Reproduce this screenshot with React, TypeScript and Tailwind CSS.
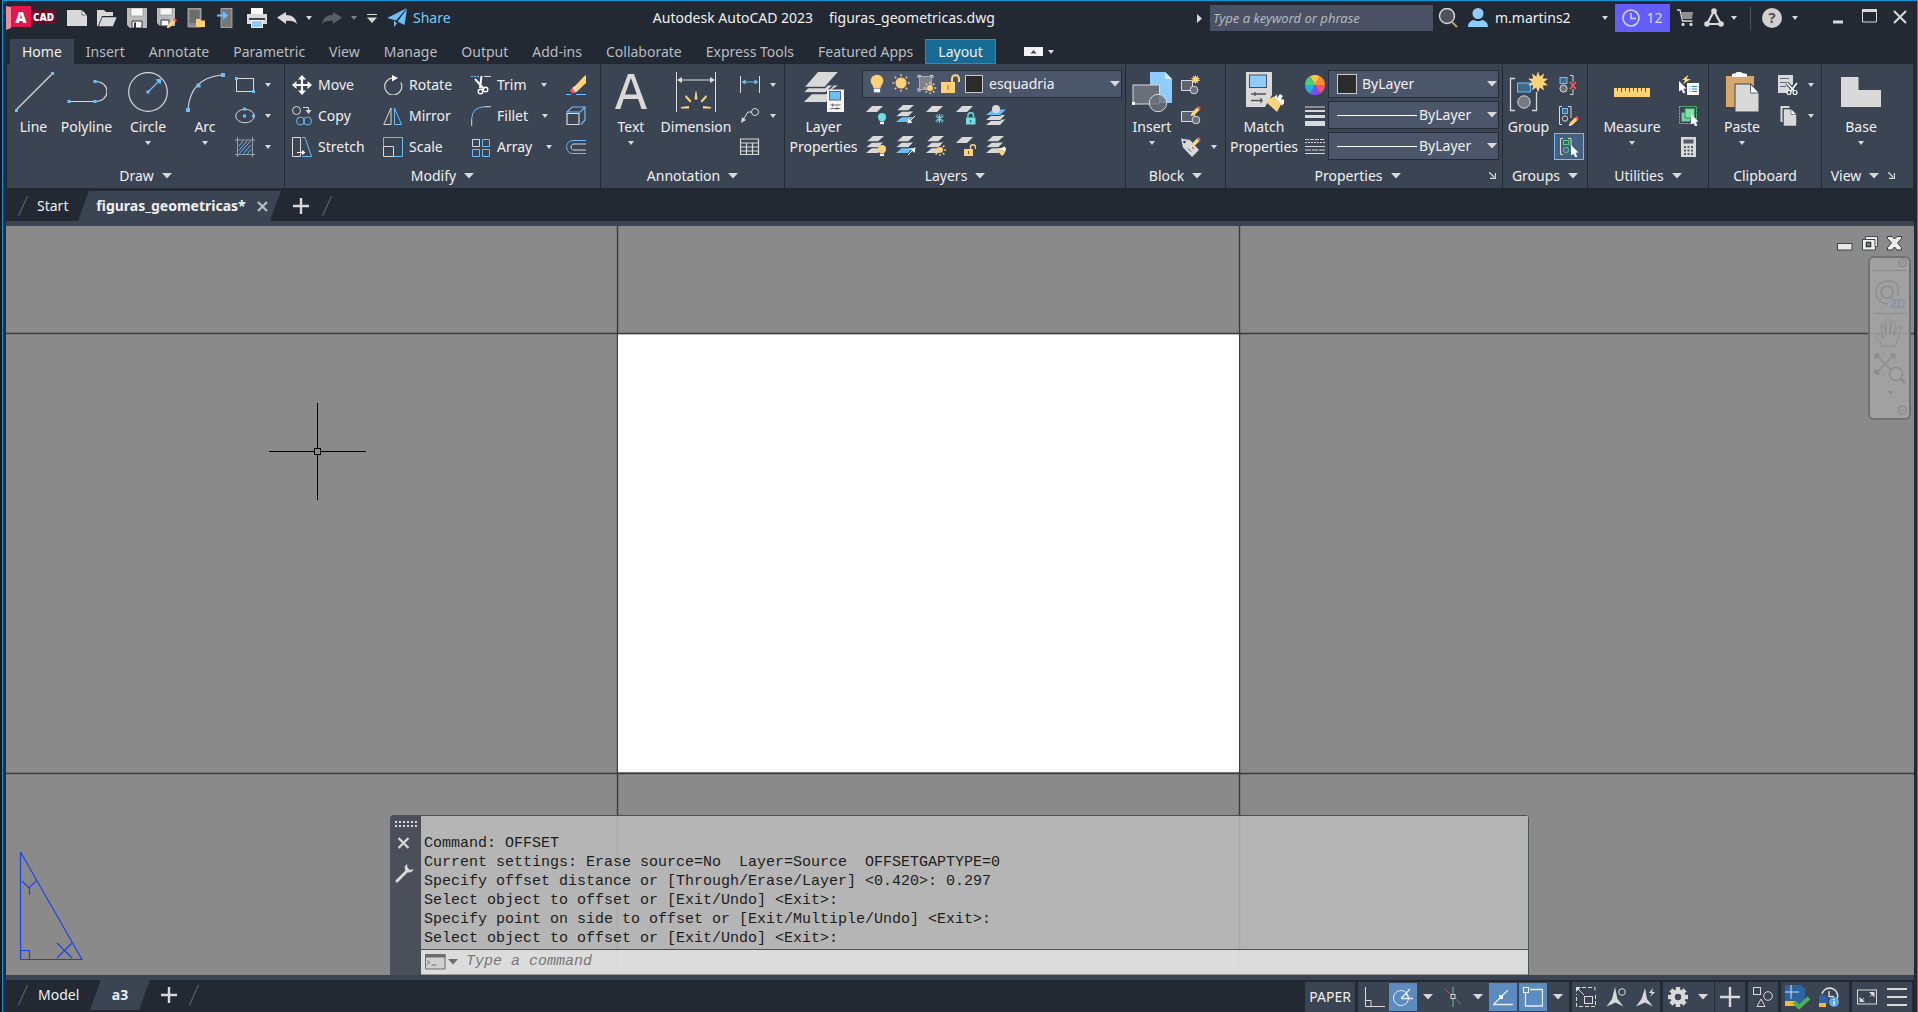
import { useState } from 'react'
import type { ReactNode } from 'react'

const L = '#d9d9d9'
const B = '#6dbdf8'
const Y = '#ffd27a'
const G = '#5bcb86'
const C = '#6fdde4'
const R = '#f25c5c'

type SvgProps = { children: ReactNode; w?: number; h?: number; vb?: string }

function Svg({ children, w = 20, h = 20, vb }: SvgProps) {
  return (
    <svg width={w} height={h} viewBox={vb ?? `0 0 ${w} ${h}`} fill="none" className="shrink-0" aria-hidden="true">
      {children}
    </svg>
  )
}

function Arrow({ big = false }: { big?: boolean }) {
  return big ? (
    <Svg w={10} h={6}>
      <path d="M0 0h10L5 5.500z" fill={L} />
    </Svg>
  ) : (
    <Svg w={6} h={4}>
      <path d="M0 0h6L3 4z" fill={L} />
    </Svg>
  )
}

/* ---------- shared pieces used by several icons ---------- */

const Dot = ({ x, y, s = 3 }: { x: number; y: number; s?: number }) => (
  <rect x={x - s / 2} y={y - s / 2} width={s} height={s} fill={B} />
)

const Pencil = ({ x, y }: { x: number; y: number }) => (
  <g transform={`translate(${x} ${y})`}>
    <path d="M0 9l1-3.500 5-5 2.500 2.500-5 5z" fill={Y} />
    <path d="M6 .5L7.500-1 10 1.500 8.500 3z" fill={R} />
    <path d="M0 9l.6-2 1.400 1.400z" fill="#fff" />
  </g>
)

const Sheets = ({ top = L, bottom = L }: { top?: string; bottom?: string }) => (
  <g>
    <path d="M6 12h11l-5 5H0z" fill={bottom} />
    <path d="M6 6.500h11l-5 5H0z" fill={L} />
    <path d="M7 0h11l-6 5.500H1z" fill={top} />
    <path d="M0 6h12.500l5-4.500M0 11.800h12.500l4-4" stroke="#3b4453" />
  </g>
)

const SunShape = ({ cx, cy, r }: { cx: number; cy: number; r: number }) => (
  <g stroke={Y} strokeWidth={1.4}>
    <circle cx={cx} cy={cy} r={r} fill={Y} stroke="none" />
    {[0, 45, 90, 135, 180, 225, 270, 315].map((a) => (
      <path key={a} d={`M${cx} ${cy - r - 1.2}v-2`} transform={`rotate(${a} ${cx} ${cy})`} />
    ))}
  </g>
)

const Star = ({ cx, cy, r }: { cx: number; cy: number; r: number }) => {
  const pts = Array.from({ length: 20 }, (_, i) => {
    const a = (Math.PI * i) / 10
    const d = i % 2 ? r * 0.55 : r
    return `${(cx + d * Math.sin(a)).toFixed(1)},${(cy - d * Math.cos(a)).toFixed(1)}`
  })
  return <polygon points={pts.join(' ')} fill={Y} />
}

const Bulb = ({ cx, cy, r, color = Y }: { cx: number; cy: number; r: number; color?: string }) => (
  <g>
    <circle cx={cx} cy={cy} r={r} fill={color} />
    <path d={`M${cx - r * 0.6} ${cy + r * 0.6}h${r * 1.2}v${r * 0.5}h-${r * 1.2}z`} fill={color} />
    <path d={`M${cx - r * 0.5} ${cy + r * 1.2}h${r}v${r * 0.6}h-${r}z`} fill="#fff" />
  </g>
)

const Cursor = ({ x, y }: { x: number; y: number }) => (
  <path d="M0 0l7.500 7.500-3 .3 1.800 3.700-2 1-1.800-3.800L0 10.500z" fill="#fff" transform={`translate(${x} ${y})`} />
)

/* ---------- 40px icons ---------- */

const big: Record<string, ReactNode> = {
  line: (
    <Svg w={40} h={40}>
      <path d="M2 38L38 2" stroke={L} strokeWidth={1.3} />
      <Dot x={2.5} y={38.5} />
      <Dot x={38.5} y={1.5} />
    </Svg>
  ),
  polyline: (
    <Svg w={40} h={40}>
      <path d="M2 29.500h26c16 0 16-20 0-20" stroke={L} strokeWidth={1.2} />
      <Dot x={2} y={29.5} />
      <Dot x={28} y={29.5} />
      <Dot x={28} y={9.5} />
    </Svg>
  ),
  circle: (
    <Svg w={40} h={40}>
      <circle cx={20} cy={20} r={19.3} stroke={L} strokeWidth={1.2} />
      <path d="M20 20L31 9" stroke={B} strokeWidth={1.3} />
      <path d="M33.500 6.500l-1 6-5-5z" fill={B} />
      <Dot x={20} y={20} />
    </Svg>
  ),
  arc: (
    <Svg w={40} h={40}>
      <path d="M3 38Q5 6 37 3" stroke={L} strokeWidth={1.2} />
      <Dot x={3} y={38} s={4} />
      <Dot x={13.500} y={13.500} s={4} />
      <Dot x={38} y={3} s={4} />
    </Svg>
  ),
  text: (
    <Svg w={40} h={40}>
      <path d="M4 37L17 2h6l13 35h-5.500l-3.300-10H12.600L9.300 37zM14 22.500h11.800L20 6z" fill={L} fillRule="evenodd" />
    </Svg>
  ),
  dimension: (
    <Svg w={40} h={40}>
      <path d="M.5 0v40M39.500 0v40M3 8h34" stroke={L} />
      <path d="M1 8l5-3v6zM39 8l-5-3v6z" fill={L} />
      <g fill={Y}>
        <path d="M18.500 27.500l1-8h1l1 8zM14 30.500l-5-5.500 1-2 5.500 6zM26 30.500l5-5.500-1-2-5.500 6zM13 34v2.500H5v-1.500zM27 34v2.500h8v-1.500z" />
      </g>
    </Svg>
  ),
  layers: (
    <Svg w={40} h={40}>
      <path d="M0 30l8-8h20l-6 8z" fill={L} />
      <path d="M0 20.500l7-7h27l-11 7z" fill={L} />
      <path d="M14 0h20L21 15H1z" fill={L} />
      <path d="M1 15.500h20L34 1M0 21h22M1 21.500h20l8-8" stroke="#3b4453" strokeWidth={1.500} />
      <rect x={23} y={17.500} width={17} height={22.500} fill="#f4f4f4" />
      <rect x={25.500} y={19.500} width={11} height={8.500} fill={B} stroke="#5b6270" />
      <path d="M26.500 33h10M26.500 36.500h10M28.500 31.500v3M33 35v3" stroke="#666" />
    </Svg>
  ),
  insert: (
    <Svg w={40} h={40}>
      <path d="M18 0h15l7 7v24H18z" fill="#8dccff" />
      <path d="M33 0v7h7z" fill="#d4ecff" />
      <rect x={1} y={13} width={26.500} height={19} fill="#6a707b" stroke={L} />
      <circle cx={26} cy={31} r={8.700} fill="#6a707b" fillOpacity={0.8} stroke={L} />
      <rect x={0} y={30} width={3} height={3} fill="#fff" />
    </Svg>
  ),
  match: (
    <Svg w={40} h={40} vb="-2 0 40 40">
      <path d="M0 0h26v23L19 35H0z" fill={L} />
      <rect x={3.500} y={3} width={17} height={12.500} fill="#8dccff" stroke="#4a505c" />
      <path d="M5 22h15M5 28.500h12M9 20v4M15 26v5" stroke="#555" strokeWidth={1.300} />
      <path d="M19 29l9-4.500 7 8L31 40z" fill={Y} />
      <path d="M28 25l3-2.500V26l3-4 3 2-2 3.500 4 0 .500 2.500-3.500 3.500z" fill="#f4f4f4" />
    </Svg>
  ),
  group: (
    <Svg w={40} h={40}>
      <path d="M6 6.500H1.500v32H6M23 38.500h4.500V20" stroke={L} strokeWidth={1.300} />
      <rect x={8.500} y={11} width={13} height={9} fill="#3e6a92" stroke={B} />
      <circle cx={15} cy={30} r={6.200} fill="#757b85" stroke={L} />
      <Star cx={29} cy={10} r={10.5} />
    </Svg>
  ),
  measure: (
    <Svg w={40} h={40}>
      <rect x={2} y={16} width={36} height={9} fill={Y} />
      <path d="M5.500 16v3M9.500 16v4M13.500 16v3M17.500 16v4M21.500 16v3M25.500 16v4M29.500 16v3M33.500 16v4" stroke="#6b5a3a" />
    </Svg>
  ),
  paste: (
    <Svg w={40} h={40}>
      <rect x={4} y={4} width={28} height={31} fill="#d6a86c" />
      <path d="M10 5V2l4-1c0-1.500 6-1.500 6 0l5 1v3z" fill="#fff" />
      <path d="M13 12h16l8 8v20H13z" fill={L} stroke="#3b4453" />
      <path d="M28.500 12v9H37z" fill="#fff" stroke="#3b4453" strokeWidth={0.800} />
    </Svg>
  ),
  base: (
    <Svg w={40} h={40}>
      <path d="M0 5h17.500v13H40v17H0z" fill={L} />
    </Svg>
  ),
}

/* ---------- 20px icons ---------- */

const small: Record<string, ReactNode> = {
  rect: (
    <Svg>
      <rect x={1.500} y={3.500} width={17} height={13} stroke={L} />
      <Dot x={1.5} y={3.5} />
      <Dot x={18.5} y={16.5} />
    </Svg>
  ),
  ellipse: (
    <Svg>
      <ellipse cx={10} cy={10} rx={9.300} ry={6.800} stroke={L} />
      <Dot x={9.5} y={10} />
      <Dot x={9.5} y={3} />
      <Dot x={18.5} y={10} />
    </Svg>
  ),
  hatch: (
    <Svg>
      <path d="M0 3h20M0 17.500h20M2.500 0v20M17.500 0v20" stroke="#9a9fa8" />
      <path d="M4 9l4-5M4 13.500L12 4M4.500 16.500L15.500 4M8.500 16.500l7.500-8.500M12.500 16.500l3.500-4" stroke={B} />
    </Svg>
  ),
  move: (
    <Svg>
      <path d="M10 1v18M1 10h18" stroke="#fff" strokeWidth={2.200} />
      <path d="M10 0l4 4.500H6zM10 20l4-4.500H6zM0 10l4.500-4v8zM20 10l-4.500-4v8z" fill="#fff" />
    </Svg>
  ),
  copy: (
    <Svg>
      <circle cx={4.500} cy={4.500} r={4} stroke={L} />
      <path d="M11 1.500h5.500V5" stroke={L} />
      <path d="M13.500 4h6l-3 4z" fill={L} />
      <circle cx={8.500} cy={15} r={4} stroke={B} />
      <circle cx={15.500} cy={15} r={4} stroke={B} />
    </Svg>
  ),
  stretch: (
    <Svg>
      <path d="M.5.500h8v19h-8z" stroke={L} />
      <path d="M10 .5h3l6.500 19H10" stroke={B} />
      <path d="M5 15.500h6" stroke="#fff" />
      <path d="M10 13l3.500 2.500L10 18z" fill="#fff" />
    </Svg>
  ),
  rotate: (
    <Svg>
      <path d="M17.800 7.500A8.500 8.500 0 1 1 9.500 3" stroke={L} strokeWidth={1.200} />
      <path d="M9 0l6 3-6 3.500z" fill="#fff" />
    </Svg>
  ),
  mirror: (
    <Svg>
      <path d="M8 2v16.500H.8z" stroke={L} />
      <path d="M11.500 2v16.500h7z" stroke={B} />
    </Svg>
  ),
  scale: (
    <Svg>
      <path d="M.5 9V.5h19v19H11" stroke={B} />
      <path d="M.5 9.500h10v10H.5z" stroke={L} />
    </Svg>
  ),
  trim: (
    <Svg>
      <path d="M0 1.500h9" stroke={B} strokeDasharray="2 1" />
      <path d="M13 1.500h7" stroke={L} />
      <path d="M4 4l9 10M10.500 1L9 13" stroke="#fff" strokeWidth={2} />
      <circle cx={9.500} cy={16.500} r={2.300} stroke="#fff" strokeWidth={1.400} />
      <circle cx={14.500} cy={14.500} r={2.300} stroke="#fff" strokeWidth={1.400} />
    </Svg>
  ),
  fillet: (
    <Svg>
      <path d="M.7 20v-7M14 .7h6" stroke={L} />
      <path d="M.7 13Q1 1 14 .7" stroke={B} />
    </Svg>
  ),
  array: (
    <Svg>
      <path d="M1.500 2.500h7v7h-7z" stroke={L} />
      <path d="M11.500 2.500h7v7h-7zM1.500 12.500h7v7h-7zM11.500 12.500h7v7h-7z" stroke={B} />
    </Svg>
  ),
  erase: (
    <Svg>
      <path d="M7 13L18 1.500 20 0v8L10.500 17z" fill={Y} />
      <path d="M4 15.500l3-3.500 3.500 5-4 1.500z" fill={R} />
      <path d="M6.500 13l2-2 3 4.500-2 2z" fill="#f3e6d0" />
      <path d="M0 19.500h5M10 19.500h10" stroke={B} />
    </Svg>
  ),
  explode: (
    <Svg>
      <path d="M1 7.500h12v11H1z" stroke={L} strokeWidth={1.200} />
      <path d="M1 6l5-5h13l-4.500 5zM15 18.500l4-4.500V2" stroke={B} strokeWidth={1.200} />
    </Svg>
  ),
  offset: (
    <Svg>
      <path d="M20 3.500H7c-8.500 0-8.500 13 0 13h13" stroke={B} />
      <path d="M20 7H8c-4 0-4 6 0 6h12" stroke={L} />
    </Svg>
  ),
  linear: (
    <Svg>
      <path d="M.5 1v17M19.500 1v17" stroke={L} />
      <path d="M3 7h14" stroke={B} />
      <path d="M1.500 7l4-2.500v5zM18.500 7l-4-2.500v5z" fill={B} />
    </Svg>
  ),
  leader: (
    <Svg>
      <circle cx={15} cy={6} r={3.500} stroke={L} />
      <path d="M11.500 6H8L3 14" stroke={L} />
      <path d="M1 17l1-6 4 3z" fill={L} />
    </Svg>
  ),
  table: (
    <Svg>
      <path d="M.5 2h18v15.500H.5zM.5 6h18M.5 10h18M.5 14h18M6.500 6v11.500M12.500 6v11.500" stroke={L} strokeWidth={1.200} />
    </Svg>
  ),
  layOff: (
    <Svg>
      <path d="M6 1h11l-6 6H0z" fill={L} />
      <Bulb cx={16} cy={12} r={4} color={C} />
    </Svg>
  ),
  layIso: (
    <Svg>
      <Sheets bottom={B} />
      <path d="M19 11l-5 5" stroke="#fff" />
      <path d="M11.500 18.500l1-5 4 4z" fill="#fff" />
    </Svg>
  ),
  layFreeze: (
    <Svg>
      <path d="M6 1h11l-6 6H0z" fill={L} />
      <path d="M13.500 9v9M9.500 11.200l8 4.600M17.500 11.200l-8 4.600M10.500 9.500l6 8M16.500 9.500l-6 8" stroke={C} />
    </Svg>
  ),
  layLock: (
    <Svg>
      <path d="M6 1h11l-6 6H0z" fill={L} />
      <rect x={10} y={12.500} width={9.500} height={7} fill={C} />
      <path d="M12 12.500v-2.500c0-3 5.500-3 5.500 0v2.500" stroke={C} strokeWidth={1.400} />
      <path d="M14.700 15v2.500" stroke="#2b5560" />
    </Svg>
  ),
  layCurrent: (
    <Svg>
      <path d="M7 14.500h12l-5 5.500H0z" fill={L} />
      <path d="M6 10h13l-5 5H0z" fill={L} />
      <path d="M7 4.500h13l-6 5.500H0z" fill={B} />
      <path d="M0 10.500h14.500l5-5M0 15.500h14.500l5-5" stroke="#3b4453" />
      <circle cx={10} cy={4} r={4} fill={L} />
    </Svg>
  ),
  layOn: (
    <Svg>
      <Sheets />
      <Bulb cx={16} cy={13} r={4} />
    </Svg>
  ),
  layUniso: (
    <Svg>
      <Sheets bottom={B} />
      <path d="M12 19l5-5" stroke="#fff" />
      <path d="M19.500 11.500l-1 5.500-4-4z" fill="#fff" />
    </Svg>
  ),
  layThaw: (
    <Svg>
      <Sheets />
      <SunShape cx={14} cy={14} r={3} />
    </Svg>
  ),
  layUnlock: (
    <Svg>
      <path d="M6 1h11l-6 6H0z" fill={L} />
      <rect x={8} y={13} width={9} height={7} fill={Y} />
      <path d="M14.500 13v-2c0-3 5-3 5 0v2" stroke={Y} strokeWidth={1.400} />
      <path d="M12.500 15v3" stroke="#6b5a3a" />
    </Svg>
  ),
  layMatch: (
    <Svg>
      <Sheets />
      <path d="M10.500 14l4-2 4.500 5-3 3z" fill={Y} />
      <path d="M14.500 12.500l4-2 1.500 2-1 4z" fill="#fff" />
    </Svg>
  ),
  blockNew: (
    <Svg>
      <path d="M.5 5.500h11v10H.5z" fill="#5c636f" stroke={L} />
      <circle cx={13} cy={15} r={3.800} fill="#6a707b" stroke={L} />
      <Star cx={14.500} cy={4.500} r={5} />
    </Svg>
  ),
  blockEdit: (
    <Svg>
      <path d="M.5 5.500h13v10H.5z" fill="#5c636f" stroke={L} />
      <circle cx={15} cy={14} r={3.800} fill="#6a707b" stroke={L} />
      <Pencil x={10} y={1} />
    </Svg>
  ),
  tag: (
    <Svg>
      <path d="M0 1.500L9 3l9 10-7 7L2 10.500z" fill={L} />
      <circle cx={3.500} cy={5} r={1.300} fill="#3b4453" />
      <path d="M7 11.500l3 3M10 9l3 3" stroke="#555" />
      <Pencil x={10} y={1} />
    </Svg>
  ),
  wheel: (
    <Svg>
      {['#ffc53d', '#ff8a3d', '#e9536b', '#7c4dff', '#19b5d8', '#4fcb7d'].map((c, i) => (
        <path key={c} d="M10 10L5 1.340A10 10 0 0 1 15 1.340z" fill={c} transform={`rotate(${i * 60} 10 10)`} />
      ))}
    </Svg>
  ),
  weights: (
    <Svg>
      <path d="M0 1h20" stroke={L} />
      <path d="M0 5h20" stroke={L} strokeWidth={2} />
      <path d="M0 10.500h20" stroke={L} strokeWidth={3} />
      <path d="M0 17.500h20" stroke={L} strokeWidth={5} />
    </Svg>
  ),
  types: (
    <Svg>
      <path d="M0 2.500h20" stroke={L} strokeDasharray="4 1" />
      <path d="M0 5.500h20" stroke={L} strokeDasharray="2 1" />
      <path d="M0 9.500h20M0 16.500h20" stroke={L} />
      <path d="M0 13h20" stroke={L} strokeDasharray="6 1" />
    </Svg>
  ),
  ungroup: (
    <Svg>
      <path d="M11 .5h3V7M11 19.500h3V14" stroke={L} />
      <rect x={1} y={2.500} width={7} height={6} fill="#3e6a92" stroke={B} />
      <circle cx={4.500} cy={13.500} r={3.600} fill="#6a707b" stroke={L} />
      <path d="M11 7l6 7M17 7l-6 7" stroke={R} strokeWidth={1.800} />
    </Svg>
  ),
  groupEdit: (
    <Svg>
      <path d="M3 .5H.5v18H3M9 .500h3V12" stroke={L} />
      <rect x={3.500} y={2.500} width={5} height={5} fill="#3e6a92" stroke={B} />
      <circle cx={6} cy={12.500} r={2.700} stroke={L} />
      <Pencil x={10} y={11} />
    </Svg>
  ),
  groupSelect: (
    <Svg>
      <path d="M4 1.500H1.500v16H4M9 1.500h3V9" stroke={L} />
      <rect x={4.500} y={3.500} width={5} height={4} fill="#2f6a5b" stroke={G} />
      <circle cx={7} cy={13} r={2.600} stroke={G} />
      <Cursor x={12} y={8} />
    </Svg>
  ),
  quick: (
    <Svg>
      <rect x={8} y={8} width={12} height={12} fill="#fff" />
      <path d="M10.500 11.500h1M13 11.500h5M10.500 14h1M13 14h5M10.500 16.500h1M13 16.500h5" stroke="#2f86c9" />
      <path d="M9 0L3 5h3L4 9l8-5H8z" fill={Y} />
      <Cursor x={0} y={6} />
    </Svg>
  ),
  selectAll: (
    <Svg>
      <path d="M.5.5h17v17H.5z" stroke={G} strokeDasharray="2 1" />
      <path d="M2.500 6.500h9v9h-9z" fill="#6fd69a" />
      <path d="M6 2.500h9.500V12H6z" fill="#7fe0a8" stroke="#3a8a5d" />
      <Cursor x={12} y={8} />
    </Svg>
  ),
  calc: (
    <Svg>
      <rect x={2} y={0} width={15} height={20} fill={L} />
      <rect x={4.500} y={2.500} width={10} height={4} fill="#555b66" />
      <path d="M5 10h2M8.500 10h2M12 10h2M5 13.500h2M8.500 13.500h2M12 13.500h2M5 17h2M8.500 17h2M12 17h2" stroke="#555b66" strokeWidth={2} />
    </Svg>
  ),
  cut: (
    <Svg>
      <path d="M0 0h15v9l-5 9H0z" fill={L} />
      <path d="M2 3.500h9M2 7.500h7M2 11.500h6" stroke="#666c77" />
      <path d="M9 8l8 9M19 8l-7 9" stroke="#3b4453" strokeWidth={3.600} />
      <path d="M9 8l8 9M19 8l-7 9" stroke="#fff" strokeWidth={1.600} />
      <circle cx={11} cy={17.500} r={2} fill="#3b4453" stroke="#fff" strokeWidth={1.200} />
      <circle cx={17} cy={17.500} r={2} fill="#3b4453" stroke="#fff" strokeWidth={1.200} />
    </Svg>
  ),
  copyClip: (
    <Svg>
      <path d="M3.500 16V1h8" stroke={L} strokeWidth={2} />
      <path d="M5.500 3h8l5 5v12h-13z" fill={L} stroke="#3b4453" strokeWidth={0.600} />
      <path d="M13 3v5.500h5.500z" fill="#fff" stroke="#3b4453" strokeWidth={0.600} />
    </Svg>
  ),
}

/* ---------- title bar ---------- */

const quickIcons: { name: string; icon: ReactNode }[] = [
  { name: 'New', icon: <Svg><path d="M0 2h15l5 5v11H0z" fill={L} /><path d="M15 2v5h5z" fill="#fff" stroke="#222933" strokeWidth={0.600} /></Svg> },
  { name: 'Open', icon: <Svg><path d="M0 2h7l2 2h7v4H5L1 18H0z" fill={L} /><path d="M5 9h15l-4 9.500H1.500z" fill={L} stroke="#222933" strokeWidth={0.500} /></Svg> },
  { name: 'Save', icon: <Svg><path d="M0 0h20v20H3l-3-3z" fill="#b9bbbe" /><path d="M4 0h12v8H4z" fill="#f7f7f7" stroke="#8a8a8a" strokeWidth={0.600} /><path d="M5 13h10v7H5z" fill="#f7f7f7" stroke="#333" /><path d="M7 14.500h2V20H7z" fill="#333" /></Svg> },
  { name: 'Save As', icon: <Svg><path d="M0 0h18v18H3l-3-3z" fill="#b9bbbe" /><path d="M3 0h12v7H3z" fill="#f7f7f7" stroke="#8a8a8a" strokeWidth={0.600} /><path d="M4 12h8v6H4z" fill="#f7f7f7" stroke="#333" /><Pencil x={10} y={11} /></Svg> },
  { name: 'Open from mobile', icon: <Svg><path d="M1 0h13v19H1z" fill="#8a8a8a" stroke="#b9b9b9" strokeWidth={0.800} /><path d="M2.500 2h10v13h-10z" fill="#6d6d6d" /><path d="M9 11h4l1 1.500h4V19H9z" fill={Y} /></Svg> },
  { name: 'Save to mobile', icon: <Svg><path d="M4 .5h11v19H4z" fill="#777" stroke="#b9b9b9" strokeWidth={0.800} /><path d="M0 7.500h7" stroke={B} strokeWidth={2} /><path d="M6 3l5 4.500L6 12z" fill={B} /></Svg> },
  { name: 'Plot', icon: <Svg><path d="M4 0h12v6H4z" fill="#fff" /><path d="M0 6h20v10H0z" fill={L} /><path d="M2 11h16" stroke="#444" strokeWidth={2} /><path d="M4.500 12.500h11v7h-11z" fill="#8dccff" stroke="#fff" /></Svg> },
  { name: 'Undo', icon: <Svg><path d="M0 9.500L9 4v3c6 0 10 3 11 9-3-3-6-3.500-11-3v3z" fill={L} /></Svg> },
]

function TitleBar() {
  return (
    <header className="mb-1 flex h-[34px] items-center text-sm text-[#f0f0f0]">
      <button aria-label="AutoCAD menu" className="ml-[3px] shrink-0">
        <Svg w={50} h={24}>
          <path d="M0 0l5 1v21l-5 2z" fill="#f08aa0" />
          <rect x={25} y={3} width={25} height={15} fill="#6e0a29" />
          <path d="M5 0h20v21H5z" fill="#e4164c" />
          <text x={15} y={17} textAnchor="middle" fontSize={15} fontWeight={800} fill="#fff" fontFamily="Open Sans, sans-serif">A</text>
          <text x={37.500} y={14.500} textAnchor="middle" fontSize={10} fontWeight={800} fill="#fff" fontFamily="Open Sans, sans-serif">CAD</text>
        </Svg>
      </button>
      <div className="ml-[11px] flex items-center gap-[10px]">
        {quickIcons.map((q) => (
          <button key={q.name} aria-label={q.name} title={q.name}>
            {q.icon}
          </button>
        ))}
      </div>
      <button aria-label="Undo list" className="ml-[9px]">
        <Arrow />
      </button>
      <button aria-label="Redo" className="ml-[10px] opacity-30">
        <Svg>
          <path d="M20 9.500L11 4v3C5 7 1 10 0 16c3-3 6-3.500 11-3v3z" fill={L} />
        </Svg>
      </button>
      <button aria-label="Redo list" className="ml-[9px] opacity-50">
        <Arrow />
      </button>
      <button aria-label="Customize toolbar" className="ml-[10px]">
        <Svg w={10} h={9}>
          <path d="M0 .5h10" stroke={L} />
          <path d="M0 3.500h10L5 9z" fill={L} />
        </Svg>
      </button>
      <button className="ml-[10px] flex items-center gap-[6px] text-[#7cc8f8]">
        <Svg>
          <path d="M0 10L20 0 9 12.500zM7 12.500V19l3-3.500zM10.500 13.500L20 1l-2.500 16z" fill={B} />
        </Svg>
        Share
      </button>

      <div className="flex min-w-0 flex-1 justify-center gap-4 whitespace-nowrap">
        <span>Autodesk AutoCAD 2023</span>
        <span>figuras_geometricas.dwg</span>
      </div>

      <button aria-label="Collapse search">
        <Svg w={5} h={9}>
          <path d="M0 0l5 4.500L0 9z" fill={L} />
        </Svg>
      </button>
      <input
        aria-label="Search help"
        placeholder="Type a keyword or phrase"
        className="ml-2 h-[26px] w-[223px] bg-[#4a5164] px-[3px] text-[13px] italic outline-none placeholder:text-[#b4b8c0]"
      />
      <button aria-label="Search" className="ml-[5px]">
        <Svg>
          <circle cx={9} cy={8} r={7.500} fill="#4c525c" stroke={L} strokeWidth={1.400} />
          <path d="M14 14l5 5" stroke="#c89a62" strokeWidth={2} />
        </Svg>
      </button>
      <button className="ml-[10px] flex w-[140px] items-center gap-[7px]">
        <Svg>
          <circle cx={10} cy={5.500} r={5.500} fill="#8dccff" />
          <path d="M0 19c0-5 4-7 6-7 2 1.500 6 1.500 8 0 2 0 6 2 6 7z" fill="#8dccff" />
        </Svg>
        <span className="flex-1 text-left">m.martins2</span>
        <Arrow />
      </button>
      <button className="ml-[7px] flex h-7 w-[55px] items-center justify-center gap-[6px] bg-[#625dfb] text-[#dcdcff]">
        <Svg w={18} h={18}>
          <circle cx={9} cy={9} r={8} stroke="#d5d4ff" strokeWidth={1.600} />
          <path d="M9 4v5.500h5" stroke="#d5d4ff" strokeWidth={1.600} />
        </Svg>
        12
      </button>
      <button aria-label="App store" className="ml-[7px]">
        <Svg w={17} h={18}>
          <path d="M0 1h3l2.500 11h10" stroke={L} strokeWidth={1.300} />
          <path d="M4 3h12l-1 7H5.500z" fill="#8f8f8f" />
          <path d="M5 14.500h2v2H5zM13 14.500h2v2h-2z" fill={L} stroke={L} />
        </Svg>
      </button>
      <button aria-label="Autodesk app menu" className="ml-[10px] flex items-center gap-[7px]">
        <Svg>
          <path d="M10 3L3 16h14z" stroke={L} strokeWidth={2.200} />
          <circle cx={10} cy={3} r={2.800} fill={L} />
          <circle cx={3} cy={16} r={2.800} fill={L} />
          <circle cx={17} cy={16} r={2.800} fill={L} />
        </Svg>
        <Arrow />
      </button>
      <div className="ml-[13px] h-6 w-px bg-[#4a5164]" />
      <button aria-label="Help" className="ml-[11px] flex items-center gap-[10px]">
        <span className="flex size-5 items-center justify-center rounded-full bg-[#d0d0d0] text-[15px] font-bold text-[#555]">?</span>
        <Arrow />
      </button>
      <button aria-label="Minimize" className="ml-[35px]">
        <Svg w={10} h={12}>
          <path d="M0 10h10" stroke={L} strokeWidth={3} />
        </Svg>
      </button>
      <button aria-label="Maximize" className="ml-[19px]">
        <Svg w={15} h={18}>
          <path d="M.5 1v12h14V1" stroke={L} />
          <path d="M0 1.500h15" stroke={L} strokeWidth={3} />
        </Svg>
      </button>
      <button aria-label="Close" className="mr-2.5 ml-4">
        <Svg w={14} h={18}>
          <path d="M1 2l12 12M13 2L1 14" stroke={L} strokeWidth={2} />
        </Svg>
      </button>
    </header>
  )
}

/* ---------- ribbon tabs ---------- */

const ribbonTabs = ['Home', 'Insert', 'Annotate', 'Parametric', 'View', 'Manage', 'Output', 'Add-ins', 'Collaborate', 'Express Tools', 'Featured Apps', 'Layout']

function RibbonTabs() {
  const [tab, setTab] = useState('Home')
  return (
    <nav className="flex h-[25px] items-center pl-[7px] text-sm whitespace-nowrap">
      {ribbonTabs.map((t) => (
        <button
          key={t}
          onClick={() => setTab(t)}
          className={`h-full px-3 ${t === tab ? 'bg-[#3b4453] text-[#f0f0f0]' : t === 'Layout' ? 'border border-[#0a96d9] bg-[#176a93] text-[#f0f0f0]' : 'text-[#b9bcc1]'}`}
        >
          {t}
        </button>
      ))}
      <button aria-label="Minimize ribbon" className="ml-[28px] flex items-center gap-[5px]">
        <Svg w={19} h={9}>
          <rect width={19} height={9} fill="#f2f2f2" />
          <path d="M6.500 6.500L9.500 3l3 3.500z" fill="#444" />
        </Svg>
        <Arrow />
      </button>
    </nav>
  )
}

/* ---------- ribbon ---------- */

function BigButton({ icon, label, label2, arrow, className }: { icon: string; label: string; label2?: string; arrow?: boolean; className: string }) {
  return (
    <button className={`flex shrink-0 flex-col items-center pt-[3px] leading-5 ${className}`}>
      {big[icon]}
      <span className="mt-[5px] whitespace-nowrap">{label}</span>
      {label2 && <span className="whitespace-nowrap">{label2}</span>}
      {arrow && <span className="mt-1"><Arrow /></span>}
    </button>
  )
}

function Tool({ icon, label, arrow, active }: { icon: string; label?: string; arrow?: boolean; active?: boolean }) {
  return (
    <button
      aria-label={label ?? icon}
      className={`flex h-[27px] shrink-0 items-center ${active ? '-mx-[5px] border border-[#6dbdf8] bg-[#46617f] px-1' : ''}`}
    >
      {small[icon]}
      {label && <span className="mr-1 ml-[6px]">{label}</span>}
      {arrow && <span className="ml-[10px]"><Arrow /></span>}
    </button>
  )
}

// three rows of small tools, stacked
function Stack({ children, className = '' }: { children: ReactNode; className?: string }) {
  return <div className={`flex shrink-0 flex-col items-start gap-1 pt-[2px] ${className}`}>{children}</div>
}

function Panel({ title, arrow = true, launcher, className, children }: { title: string; arrow?: boolean; launcher?: boolean; className: string; children: ReactNode }) {
  return (
    <section className={`flex flex-col border-r border-[#222933] ${className}`}>
      <div className="flex h-[99px] pt-[5px]">{children}</div>
      <div className="flex h-[25px] items-center">
        <button className="flex flex-1 items-center justify-center gap-2">
          {title}
          {arrow && <Arrow big />}
        </button>
        {launcher && (
          <button aria-label={`${title} settings`} className="mr-[6px]">
            <Svg w={7} h={7}>
              <path d="M0 0l5 5M6.500 1v5.500H1" stroke={L} strokeWidth={1.300} />
            </Svg>
          </button>
        )}
      </div>
    </section>
  )
}

const comboClass = 'flex h-7 items-center border border-[#262c37] bg-[#4c566a]'

function Ribbon() {
  return (
    <div className="mr-[4px] ml-[4px] flex h-[124px] bg-[#3b4453] text-sm text-[#f0f0f0]">
      <Panel title="Draw" className="w-[278px]">
        <BigButton icon="line" label="Line" className="w-[53px]" />
        <BigButton icon="polyline" label="Polyline" className="w-[53px]" />
        <BigButton icon="circle" label="Circle" arrow className="w-[70px]" />
        <BigButton icon="arc" label="Arc" arrow className="w-11" />
        <Stack className="pl-2">
          <Tool icon="rect" arrow />
          <Tool icon="ellipse" arrow />
          <Tool icon="hatch" arrow />
        </Stack>
      </Panel>

      <Panel title="Modify" className="w-[316px]">
        <Stack className="w-[98px] pl-[7px]">
          <Tool icon="move" label="Move" />
          <Tool icon="copy" label="Copy" />
          <Tool icon="stretch" label="Stretch" />
        </Stack>
        <Stack className="w-[88px]">
          <Tool icon="rotate" label="Rotate" />
          <Tool icon="mirror" label="Mirror" />
          <Tool icon="scale" label="Scale" />
        </Stack>
        <Stack className="w-[95px]">
          <Tool icon="trim" label="Trim" arrow />
          <Tool icon="fillet" label="Fillet" arrow />
          <Tool icon="array" label="Array" arrow />
        </Stack>
        <Stack>
          <Tool icon="erase" />
          <Tool icon="explode" />
          <Tool icon="offset" />
        </Stack>
      </Panel>

      <Panel title="Annotation" className="w-[184px]">
        <BigButton icon="text" label="Text" arrow className="w-[60px]" />
        <BigButton icon="dimension" label="Dimension" className="w-[70px]" />
        <Stack className="pl-[9px]">
          <Tool icon="linear" arrow />
          <Tool icon="leader" arrow />
          <Tool icon="table" />
        </Stack>
      </Panel>

      <Panel title="Layers" className="w-[341px]">
        <BigButton icon="layers" label="Layer" label2="Properties" className="w-[77px]" />
        <div className="flex flex-col gap-[3px] pt-px">
          <div className={`${comboClass} w-[260px] pl-[7px]`}>
            <Svg w={94} h={20}>
              <Bulb cx={7} cy={7} r={6.300} />
              <SunShape cx={31} cy={9} r={5.500} />
              <path d="M48 4V1.500h3M60 1.500h3V4M48 14v3h3" stroke={L} />
              <rect x={49.500} y={2.500} width={12} height={13} fill="#7d828d" stroke="#a5a9b2" />
              <SunShape cx={60} cy={14} r={3} />
              <rect x={71} y={8} width={14} height={11} fill={Y} />
              <path d="M82 8V5c0-5 7-5 7 0v3" stroke={Y} strokeWidth={2} />
              <path d="M78 11v5" stroke="#8a6d33" />
            </Svg>
            <span className="ml-px size-[18px] shrink-0 border border-[#c9c9c9] bg-[#2b2b2b]" />
            <select aria-label="Layer" className="ml-[6px] min-w-0 flex-1 appearance-none bg-transparent outline-none">
              <option>esquadria</option>
            </select>
            <span className="pointer-events-none mr-px"><Arrow big /></span>
          </div>
          <div className="flex gap-[10px] pl-1">
            {['layOff', 'layIso', 'layFreeze', 'layLock', 'layCurrent'].map((i) => <Tool key={i} icon={i} />)}
          </div>
          <div className="mt-px flex gap-[10px] pl-1">
            {['layOn', 'layUniso', 'layThaw', 'layUnlock', 'layMatch'].map((i) => <Tool key={i} icon={i} />)}
          </div>
        </div>
      </Panel>

      <Panel title="Block" className="w-[100px]">
        <BigButton icon="insert" label="Insert" arrow className="w-[52px]" />
        <Stack className="pl-[3px]">
          <Tool icon="blockNew" />
          <Tool icon="blockEdit" />
          <Tool icon="tag" arrow />
        </Stack>
      </Panel>

      <Panel title="Properties" launcher className="w-[277px]">
        <BigButton icon="match" label="Match" label2="Properties" className="w-[76px]" />
        <Stack className="pl-[3px]">
          <Tool icon="wheel" />
          <Tool icon="weights" />
          <Tool icon="types" />
        </Stack>
        <div className="ml-[3px] flex w-[171px] flex-col gap-[3px] pt-px">
          <div className={`${comboClass} pl-2`}>
            <span className="size-5 shrink-0 border border-[#c9c9c9] bg-[#2b2b2b]" />
            <select aria-label="Object color" className="ml-[5px] min-w-0 flex-1 appearance-none bg-transparent outline-none">
              <option>ByLayer</option>
            </select>
            <span className="pointer-events-none mr-px"><Arrow big /></span>
          </div>
          {['Lineweight', 'Linetype'].map((n) => (
            <div key={n} className={`${comboClass} pl-2`}>
              <span className="h-px w-20 shrink-0 bg-white" />
              <select aria-label={n} className="ml-[2px] min-w-0 flex-1 appearance-none bg-transparent outline-none">
                <option>ByLayer</option>
              </select>
              <span className="pointer-events-none mr-px"><Arrow big /></span>
            </div>
          ))}
        </div>
      </Panel>

      <Panel title="Groups" className="w-[85px]">
        <BigButton icon="group" label="Group" className="w-[51px]" />
        <Stack className="pl-[5px]">
          <Tool icon="ungroup" />
          <Tool icon="groupEdit" />
          <Tool icon="groupSelect" active />
        </Stack>
      </Panel>

      <Panel title="Utilities" className="w-[121px]">
        <BigButton icon="measure" label="Measure" arrow className="w-[88px]" />
        <Stack className="pl-[3px]">
          <Tool icon="quick" />
          <Tool icon="selectAll" />
          <Tool icon="calc" />
        </Stack>
      </Panel>

      <Panel title="Clipboard" arrow={false} className="w-[113px]">
        <BigButton icon="paste" label="Paste" arrow className="w-[66px]" />
        <Stack className="pl-[3px]">
          <Tool icon="cut" arrow />
          <Tool icon="copyClip" arrow />
        </Stack>
      </Panel>

      <Panel title="View" launcher className="flex-1 border-r-0 pr-3">
        <BigButton icon="base" label="Base" arrow className="w-[78px]" />
      </Panel>
    </div>
  )
}

/* ---------- file and layout tabs ---------- */

const Slash = ({ h }: { h: number }) => (
  <Svg w={10} h={h}>
    <path d={`M9.500 0L.5 ${h}`} stroke="#5a6270" strokeWidth={1.200} />
  </Svg>
)

const Plus = () => (
  <Svg w={16} h={16}>
    <path d="M8 0v16M0 8h16" stroke={L} strokeWidth={2.400} />
  </Svg>
)

function FileTabs() {
  return (
    <div className="mt-[3px] flex h-[30px] items-center pl-[15px] text-sm text-[#f0f0f0]">
      <Slash h={20} />
      <button className="ml-[9px] w-[41px] text-left">Start</button>
      <div className="flex h-full w-[203px] items-center justify-center gap-[11px] bg-[#3b4453] pl-[5px] font-bold [clip-path:polygon(11px_0,100%_0,calc(100%-11px)_100%,0_100%)]">
        <button>figuras_geometricas*</button>
        <button aria-label="Close drawing">
          <Svg w={11} h={11}>
            <path d="M1 1l9 9M10 1l-9 9" stroke="#b9bcc1" strokeWidth={2.200} />
          </Svg>
        </button>
      </div>
      <button aria-label="New drawing" className="ml-3">
        <Plus />
      </button>
      <span className="ml-[13px]"><Slash h={20} /></span>
    </div>
  )
}

/* ---------- drawing area ---------- */

const logLines = [
  'Command: OFFSET',
  'Current settings: Erase source=No  Layer=Source  OFFSETGAPTYPE=0',
  'Specify offset distance or [Through/Erase/Layer] <0.420>: 0.297',
  'Select object to offset or [Exit/Undo] <Exit>:',
  'Specify point on side to offset or [Exit/Multiple/Undo] <Exit>:',
  'Select object to offset or [Exit/Undo] <Exit>:',
]

function CommandWindow() {
  return (
    <div className="absolute right-[385px] bottom-0 left-[384px] flex overflow-hidden rounded-t-sm font-['Liberation_Mono',monospace] text-[15px] text-[#1c1c1c]">
      <div className="flex w-[31px] shrink-0 flex-col items-center bg-[#4a4f5a] pt-[6px]">
        <Svg w={22} h={7}>
          <path d="M0 1h22M0 5h22" stroke={L} strokeWidth={2} strokeDasharray="2 2" />
        </Svg>
        <button aria-label="Close command line" className="mt-[9px] mr-1">
          <Svg w={13} h={12}>
            <path d="M1.500 1l10 10M11.500 1L1.500 11" stroke={L} strokeWidth={2.200} />
          </Svg>
        </button>
        <button aria-label="Customize" className="mt-[14px] mr-[2px]">
          <Svg w={19} h={20}>
            <path d="M2 18L12 8" stroke={L} strokeWidth={3} strokeLinecap="round" />
            <path d="M12 1a4.500 4.500 0 1 0 6.500 5L15 7l-2.500-2.500z" fill={L} />
          </Svg>
        </button>
      </div>
      <div className="min-w-0 flex-1 border-t border-r border-[#4a4f5a]">
        <div className="bg-[#bcbcbc]/85 pt-[18px] pb-px pl-[3px] leading-[19px] whitespace-pre">
          {logLines.map((l, i) => (
            <div key={i}>{l}</div>
          ))}
        </div>
        <label className="flex h-[26px] items-center border-t border-b border-t-[#4a4f5a] border-b-[#9a9a9a] bg-[#e0e0e0]/95 pl-1">
          <Svg w={21} h={16}>
            <path d="M.5.500h19.500v14.500H.5z" stroke="#6d6d6d" fill="#d0d0d0" />
            <path d="M0 0h20.500v3.500H0z" fill="#6d6d6d" />
            <path d="M2 6.500l3 2-3 2M6.500 11h5" stroke="#6d6d6d" />
          </Svg>
          <span className="mx-[2px]">
            <Svg w={10} h={6}>
              <path d="M0 0h10L5 5.500z" fill="#6d6d6d" />
            </Svg>
          </span>
          <input aria-label="Command" placeholder="Type a command" className="ml-[6px] min-w-0 flex-1 bg-transparent italic outline-none placeholder:text-[#777]" />
        </label>
      </div>
    </div>
  )
}

function NavBar() {
  return (
    <div className="absolute top-[30px] right-[3px] h-[164px] w-[43px] rounded-md border-2 border-[#727272] bg-[#a3a3a3]/90">
      <svg width={38} height={159} viewBox="0 0 38 159" fill="none" stroke="#8c8c8c" aria-hidden="true">
        <circle cx={32.500} cy={5} r={3.800} strokeWidth={1.500} />
        <path d="M31 3.500l3 3M34 3.500l-3 3M2 12.500h35M4 55.500h33" />
        <path d="M28 38V29c0-4-4-6-10-6-7 0-12 5-12 11s5 12 12 12" strokeWidth={1.300} />
        <circle cx={17} cy={34} r={6} strokeWidth={1.500} />
        <path d="M9 43l4-4M21 39l3 3" />
        <text x={20} y={50} fontSize={12} fontWeight={700} fill="#8795a5" stroke="none" fontFamily="Open Sans, sans-serif">2D</text>
        <path d="M12 88C10 83 5 79 6 77c1-2 5 0 7 4l-2-13c0-3 3-3 3 0l2 9V63c0-3 4-3 4 0v13l2-11c1-3 4-2 3 1l-1 12 4-9c2-2 4-1 3 1-2 7-3 12-6 18z" />
        <path d="M6 97l18 18M24 97L6 115" strokeWidth={1.300} />
        <path d="M5 96h5l-5 5zM25 96h-5l5 5zM5 116h5l-5-5z" fill="#8c8c8c" />
        <circle cx={26} cy={116} r={6.500} fill="#a3a3a3" strokeWidth={1.500} />
        <path d="M31 121l4 4" strokeWidth={3} />
        <path d="M17 133h7l-3.500 3.500z" fill="#8c8c8c" stroke="none" />
        <circle cx={32.500} cy={152} r={4} strokeWidth={1.500} />
        <path d="M30.500 152h4" />
      </svg>
    </div>
  )
}

function Canvas() {
  return (
    <main className="relative mr-[3px] ml-[3px] min-h-0 flex-1 overflow-hidden bg-[#8a8a8a]">
      <svg className="absolute inset-0 size-full" fill="none" aria-label="Layout a3">
        <g stroke="#3c3c3c" strokeWidth={1.400}>
          <path d="M611.500 0V1000M1233.500 0V1000" />
          <path d="M0 107.500H4000M0 547.500H4000" />
        </g>
        <rect x={612} y={108.500} width={621} height={437.500} fill="#fff" />
        {/* crosshair */}
        <path d="M263 225.500h45M315 225.500h45M311.500 177v45M311.500 229v45" stroke="#000" />
        <rect x={308.500} y={222.500} width={6} height={6} stroke="#000" />
      </svg>
      {/* UCS icon */}
      <svg className="absolute bottom-[13px] left-[13px]" width={64} height={112} viewBox="0 0 64 112" fill="none" stroke="#1a45e6" aria-hidden="true">
        <path d="M1.500 2v107.500H63L1.500 2M1.500 100.500h9v9M3 31l7 7 7-7M10.500 38v7M38 93l15 15M53 93l-15 15" strokeWidth={1.200} />
      </svg>
      <div className="absolute top-[10px] right-3 flex items-start gap-[9px]">
        <button aria-label="Minimize viewport">
          <Svg w={16} h={15}>
            <rect x={0.500} y={7.500} width={14.500} height={6.500} fill="#e8e8e8" stroke="#444" />
          </Svg>
        </button>
        <button aria-label="Restore viewport">
          <Svg w={16} h={15}>
            <path d="M3.500.500h12v10h-2V14H.5V3.500h3z" fill="#f0f0f0" stroke="#3f4452" />
            <path d="M3.500 3.500h9.500V11" stroke="#3f4452" />
            <rect x={4.500} y={6.500} width={4} height={4} fill="#999" stroke="#333" strokeWidth={1.500} />
          </Svg>
        </button>
        <button aria-label="Close viewport">
          <Svg w={15} h={15}>
            <path d="M.5.500h4.500l2.500 2.500L10 .500h4.500v2L10.500 7l4 4.500V14H10L7.500 11 5 14H.5v-2.500L4.500 7 .5 2.500z" fill="#eee" stroke="#333" />
          </Svg>
        </button>
      </div>
      <NavBar />
      <CommandWindow />
    </main>
  )
}

/* ---------- status bar ---------- */

function Toggle({ label, on, children }: { label: string; on?: boolean; children: ReactNode }) {
  const [active, setActive] = useState(!!on)
  return (
    <button
      aria-label={label}
      aria-pressed={active}
      onClick={() => setActive(!active)}
      className={`flex h-7 w-7 items-center justify-center ${active ? 'bg-[#5b8bbf]' : ''}`}
    >
      {children}
    </button>
  )
}

const groupClass = 'flex h-full items-center bg-[#3b4453]'

function Drop({ label }: { label: string }) {
  return (
    <button aria-label={label} className="flex w-[22px] justify-center">
      <Arrow big />
    </button>
  )
}

function StatusBar() {
  return (
    <footer className="flex h-8 items-stretch text-sm text-[#f0f0f0]">
      <div className="flex items-start">
        <div className="flex h-[30px] items-center pl-[15px]">
          <Slash h={20} />
          <button className="ml-[10px] w-[52px] text-left">Model</button>
          <button className="h-full w-[60px] bg-[#3b4453] font-bold [clip-path:polygon(11px_0,100%_0,calc(100%-11px)_100%,0_100%)]">a3</button>
          <button aria-label="New layout" className="ml-[11px]">
            <Plus />
          </button>
          <span className="ml-3"><Slash h={20} /></span>
        </div>
      </div>
      <div className="mr-[5px] ml-auto flex items-center gap-[3px] pt-[2px]">
        <button className={`${groupClass} px-1`}>PAPER</button>
        <div className={`${groupClass} pl-[3px]`}>
          <Toggle label="Grid">
            <Svg><path d="M.5 0v19.500H20M.5 13.500H6v6" stroke={L} /></Svg>
          </Toggle>
          <Toggle label="Polar tracking" on>
            <Svg>
              <circle cx={8} cy={11} r={7.500} stroke="#e8eef5" />
              <path d="M8 11.500h12M8 11.500L17 2M13 6.500l3 5" stroke="#e8eef5" strokeWidth={1.300} />
            </Svg>
          </Toggle>
          <Drop label="Polar options" />
          <Toggle label="Isometric drafting">
            <Svg>
              <path d="M2 2l16 15" stroke="#c05a66" />
              <path d="M10 0v20" stroke={G} />
              <rect x={8} y={7.500} width={4} height={4} fill="#3b4453" stroke={L} />
            </Svg>
          </Toggle>
          <Drop label="Isometric options" />
          <div className="flex gap-[2px]">
            <Toggle label="Object snap tracking" on>
              <Svg>
                <path d="M0 17.500h20M1 17L15 3" stroke="#e8eef5" strokeWidth={1.300} />
                <rect x={6} y={8} width={4} height={4} fill="#fff" />
              </Svg>
            </Toggle>
            <Toggle label="Object snap" on>
              <Svg>
                <path d="M2.500 6v13h17V2.500H7" stroke="#e8eef5" strokeWidth={1.300} />
                <rect x={0.500} y={0.500} width={5} height={5} stroke="#fff" />
              </Svg>
            </Toggle>
          </div>
          <Drop label="Snap options" />
        </div>
        <div className={`${groupClass} gap-[2px]`}>
          <Toggle label="Selection cycling">
            <Svg>
              <path d="M6 .5h13v4M19.500 8v11.500h-19V7" stroke={L} strokeDasharray="4 2" />
              <rect x={8.500} y={9.500} width={8} height={7} stroke={L} />
              <path d="M2 2l6 6" stroke={L} />
              <path d="M0 0h5L0 5z" fill={L} />
            </Svg>
          </Toggle>
          <Toggle label="Annotation visibility">
            <Svg>
              <path d="M9 0l2.500 12 6 7.500-8-4-9 4 5.500-7.500z" fill={L} />
              <circle cx={16} cy={5} r={3.300} fill="#3b4453" stroke={L} />
            </Svg>
          </Toggle>
          <Toggle label="Auto scale">
            <Svg>
              <path d="M9 1l2 11 6 7.500-8-4-9 4 5.500-7.500z" fill={L} />
              <path d="M17 1l-4 5h3l-2 4 5-5h-3z" fill={L} />
            </Svg>
          </Toggle>
        </div>
        <div className={`${groupClass} pl-px`}>
          <button aria-label="Workspace" className="flex w-[28px] justify-center">
            <Svg>
              <g fill={L}>
                {[0, 45, 90, 135].map((a) => (
                  <rect key={a} x={7.800} y={0} width={4.400} height={20} transform={`rotate(${a} 10 10)`} />
                ))}
                <circle cx={10} cy={10} r={7.500} />
              </g>
              <circle cx={10} cy={10} r={3.200} fill="#3b4453" />
            </Svg>
          </button>
          <Drop label="Workspace options" />
          <div className="h-full w-px bg-[#222933]" />
          <button aria-label="Annotation monitor" className="flex w-[30px] justify-center">
            <Svg><path d="M10 0v20M0 10h20" stroke={L} strokeWidth={2.400} /></Svg>
          </button>
        </div>
        <button aria-label="Isolate objects" className={`${groupClass} w-[30px] justify-center`}>
          <Svg>
            <rect x={0.500} y={0.500} width={7} height={7} stroke={L} />
            <circle cx={15} cy={9} r={4.300} stroke={L} />
            <path d="M8 12l4 7.500H4z" stroke={L} />
          </Svg>
        </button>
        <div className={`${groupClass} w-[68px] gap-[9px] pl-1`}>
          <button aria-label="Trusted drawing">
            <Svg w={25} h={25}>
              <path d="M0 0h16l4 4v12l-8 4H0z" fill="#2c63a3" />
              <path d="M0 16h10v5H0z" fill="#fdb924" />
              <path d="M6 0v14M0 7h14" stroke="#cfe3f7" />
              <path d="M9 17l5 5L24 13" stroke="#4faf55" strokeWidth={4} />
            </Svg>
          </button>
          <button aria-label="Recent activity">
            <Svg>
              <path d="M3 7A8 8 0 1 1 12 17" stroke={L} strokeWidth={1.600} />
              <path d="M10 4v5.500h5" stroke={L} strokeWidth={1.400} />
              <path d="M0 8h6l3 3v5H0z" fill="#2c63a3" />
              <path d="M0 16h7v4H0z" fill="#fdb924" />
              <circle cx={15} cy={15} r={5} fill="#59aaea" />
              <path d="M15 12v1M15 14v4" stroke="#fff" strokeWidth={1.400} />
            </Svg>
          </button>
        </div>
        <div className={`${groupClass} gap-[2px] pr-px pl-px`}>
          <button aria-label="Clean screen" className="flex w-7 justify-center">
            <Svg>
              <rect x={0.500} y={3} width={19} height={14} stroke={L} />
              <path d="M12 5h5.500v5.500zM2.500 10v5H8z" fill={L} />
              <path d="M13 9.500l3-3M4 14l3-3" stroke={L} />
            </Svg>
          </button>
          <button aria-label="Customization" className="flex w-7 justify-center">
            <Svg><path d="M0 2h20M0 10h20M0 18h20" stroke={L} strokeWidth={2.200} /></Svg>
          </button>
        </div>
      </div>
    </footer>
  )
}

export default function App() {
  return (
    <div className="flex h-screen flex-col border-l-2 border-[#14181f] font-['Noto_Sans',sans-serif]">
      <div className="flex min-h-0 flex-1 flex-col overflow-hidden border-x border-t border-[#0a96d9] bg-[#222933]">
        <TitleBar />
        <RibbonTabs />
        <Ribbon />
        <FileTabs />
        <div className="mr-[3px] ml-[3px] h-[5px] bg-[#3b4453]" />
        <Canvas />
        <div className="mr-[3px] ml-[3px] h-[5px] bg-[#3b4453]" />
        <StatusBar />
      </div>
    </div>
  )
}
